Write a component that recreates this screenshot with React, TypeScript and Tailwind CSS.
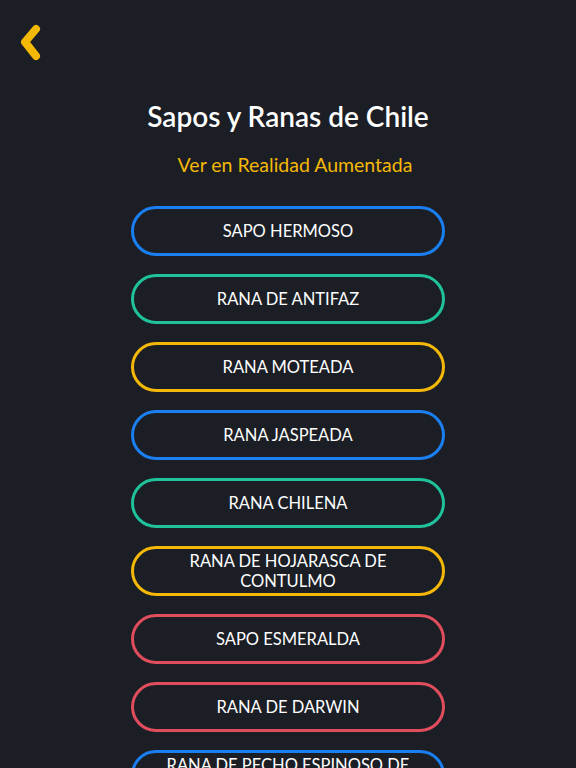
import React from 'react';

const species: { name: string; color: string }[] = [
  { name: 'SAPO HERMOSO', color: 'border-[#1a7ff0]' },
  { name: 'RANA DE ANTIFAZ', color: 'border-[#1fc29a]' },
  { name: 'RANA MOTEADA', color: 'border-[#f4b806]' },
  { name: 'RANA JASPEADA', color: 'border-[#1a7ff0]' },
  { name: 'RANA CHILENA', color: 'border-[#1fc29a]' },
  { name: 'RANA DE HOJARASCA DE CONTULMO', color: 'border-[#f4b806]' },
  { name: 'SAPO ESMERALDA', color: 'border-[#e04d5d]' },
  { name: 'RANA DE DARWIN', color: 'border-[#e04d5d]' },
  { name: 'RANA DE PECHO ESPINOSO DE CHILE', color: 'border-[#1a7ff0]' },
];

const App: React.FC = () => {
  return (
    <div className="h-[768px] overflow-hidden bg-[#1b1e25] font-['Lato','Open_Sans',sans-serif]">
      <div className="pt-[20px] pl-[16px]">
        <button className="block">
          <svg width="28" height="44" viewBox="0 0 28 44" fill="none">
            <path d="M20 9 L9 22 L20 36" stroke="#f4b806" strokeWidth="8" strokeLinecap="round" strokeLinejoin="round" />
          </svg>
        </button>
      </div>
      <h1 className="mt-[36px] text-center text-[28px] leading-[32px] font-semibold text-white">
        Sapos y Ranas de Chile
      </h1>
      <p className="mt-[21px] pl-[14px] text-center text-[19.5px] leading-[24px] text-[#f4b806]">
        Ver en Realidad Aumentada
      </p>
      <div className="mt-[29px] flex flex-col items-center gap-[18px]">
        {species.map((s) => (
          <button
            key={s.name}
            className={`flex h-[50px] w-[314px] shrink-0 items-center justify-center rounded-full border-[3px] px-[28px] text-center text-[16.5px] leading-[20px] text-white ${s.color}`}
          >
            {s.name}
          </button>
        ))}
      </div>
    </div>
  );
};

export default App;
